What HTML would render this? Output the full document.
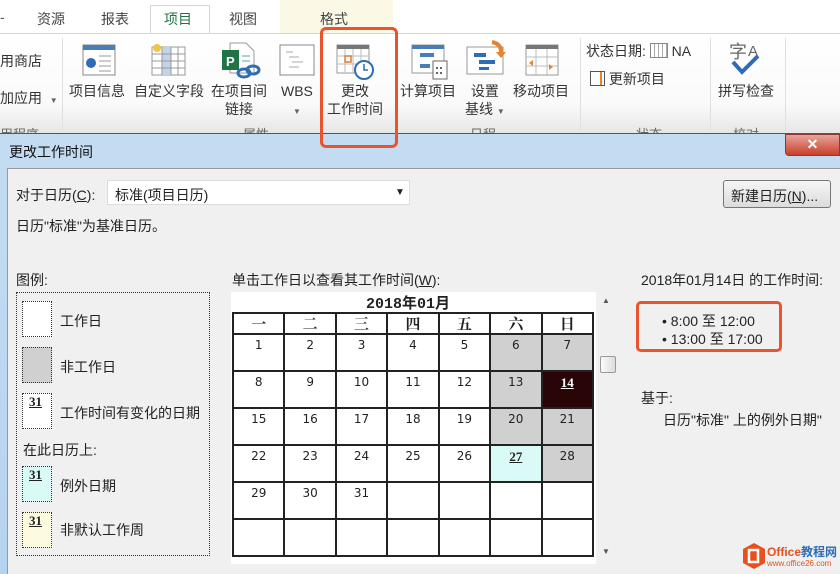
<!DOCTYPE html>
<html><head><meta charset="utf-8">
<style>
*{margin:0;padding:0;box-sizing:border-box}
body{width:840px;height:574px;overflow:hidden;position:relative;background:#fff;font-family:"Liberation Sans","Microsoft YaHei","Noto Sans CJK SC",sans-serif;font-size:14px;color:#222}
.a{position:absolute}
.t{position:absolute;white-space:nowrap}
.lbl{font-size:14px;color:#333;text-align:center;line-height:18px}
.cal td{border:2px solid #222;width:51.6px;height:37px;vertical-align:top;text-align:center;font-family:"DejaVu Sans","Noto Sans CJK SC",sans-serif;font-size:12px;padding-top:3px;background:#fff}
.cal th{border:2px solid #222;height:21px;font-family:"Noto Serif CJK SC","Noto Sans CJK SC",serif;font-size:15px;font-weight:bold;background:#fff;line-height:16px}
.g{background:#d0d0d0!important}
.box{position:absolute;left:22px;width:30px;height:36px;border:1px dotted #333;font-family:"Liberation Serif",serif;font-weight:bold;font-size:13px;text-decoration:underline;padding-left:6px;line-height:16px}
</style></head><body>
<div class="a" style="left:0;top:0;width:840px;height:34px;background:#fff"></div>
<div class="a" style="left:280px;top:0;width:113px;height:33px;background:#fbf8e6"></div>
<div class="t" style="left:0;top:9px;color:#555">-</div>
<div class="t" style="left:37px;top:9px;color:#444">资源</div>
<div class="t" style="left:101px;top:9px;color:#444">报表</div>
<div class="a" style="left:150px;top:5px;width:60px;height:30px;border:1px solid #d4d4d4;border-bottom:none;background:#fff"></div>
<div class="t" style="left:164px;top:9px;color:#217346">项目</div>
<div class="t" style="left:229px;top:9px;color:#444">视图</div>
<div class="t" style="left:320px;top:9px;color:#444">格式</div>
<div class="a" style="left:0;top:33px;width:840px;height:101px;background:linear-gradient(#fff,#fafafa 70%,#e6e6e6);border-top:1px solid #d6d6d6"></div>
<div class="a" style="left:62px;top:38px;width:1px;height:92px;background:#e0e0e0"></div>
<div class="a" style="left:580px;top:38px;width:1px;height:92px;background:#e0e0e0"></div>
<div class="a" style="left:710px;top:38px;width:1px;height:92px;background:#e0e0e0"></div>
<div class="a" style="left:785px;top:38px;width:1px;height:92px;background:#e0e0e0"></div>
<div class="t lbl" style="left:0;top:52px">用商店</div>
<div class="t lbl" style="left:0;top:89px">加应用 &nbsp;<span style="font-size:8px;color:#666">▼</span></div>
<svg class="a" style="left:82px;top:44px" width="34" height="32"><rect x="1" y="1" width="32" height="30" fill="#fff" stroke="#888"/><rect x="1" y="1" width="32" height="5" fill="#4a7ebb"/><circle cx="9" cy="19" r="5" fill="#2e6db4"/><g stroke="#999"><line x1="17" y1="12" x2="29" y2="12"/><line x1="17" y1="17" x2="29" y2="17"/><line x1="17" y1="22" x2="29" y2="22"/><line x1="17" y1="27" x2="29" y2="27"/></g></svg>
<svg class="a" style="left:148px;top:41px" width="40" height="36"><rect x="4" y="6" width="33" height="28" fill="#fff" stroke="#999"/><rect x="14" y="6" width="9" height="28" fill="#c5d3e6"/><g stroke="#999"><line x1="4" y1="13" x2="37" y2="13"/><line x1="4" y1="20" x2="37" y2="20"/><line x1="4" y1="27" x2="37" y2="27"/><line x1="14" y1="6" x2="14" y2="34"/><line x1="23" y1="6" x2="23" y2="34"/><line x1="30" y1="6" x2="30" y2="34"/></g><circle cx="9" cy="7" r="4" fill="#f5c342"/></svg>
<svg class="a" style="left:220px;top:42px" width="42" height="38"><path d="M10 1h16l8 8v22H10z" fill="#fff" stroke="#999"/><rect x="2" y="8" width="17" height="20" fill="#217346"/><text x="6" y="24" fill="#fff" font-size="13" font-weight="bold" font-family="Liberation Sans">P</text><g stroke="#5aa"><line x1="22" y1="14" x2="30" y2="14"/><line x1="22" y1="19" x2="30" y2="19"/></g><ellipse cx="24" cy="31" rx="6" ry="4" fill="none" stroke="#2e6db4" stroke-width="3"/><ellipse cx="33" cy="28" rx="6" ry="4" fill="none" stroke="#2e6db4" stroke-width="3"/></svg>
<svg class="a" style="left:279px;top:44px" width="36" height="32"><rect x="1" y="1" width="34" height="30" fill="#fff" stroke="#888"/><g stroke="#aaa"><line x1="7" y1="8" x2="14" y2="8"/><line x1="10" y1="13" x2="20" y2="13"/><line x1="13" y1="18" x2="24" y2="18"/><line x1="10" y1="23" x2="20" y2="23"/></g></svg>
<svg class="a" style="left:336px;top:44px" width="40" height="36"><rect x="1" y="1" width="32" height="28" fill="#fff" stroke="#999"/><rect x="1" y="1" width="32" height="4" fill="#777"/><g stroke="#bbb"><line x1="1" y1="12" x2="33" y2="12"/><line x1="1" y1="20" x2="33" y2="20"/><line x1="9" y1="5" x2="9" y2="29"/><line x1="17" y1="5" x2="17" y2="29"/><line x1="25" y1="5" x2="25" y2="29"/></g><rect x="9" y="12" width="6" height="6" fill="none" stroke="#e07a2b" stroke-width="1.5"/><circle cx="28" cy="26" r="9" fill="#fff" stroke="#2e6db4" stroke-width="2"/><path d="M28 20v6h4" stroke="#2e6db4" fill="none" stroke-width="1.5"/></svg>
<svg class="a" style="left:411px;top:44px" width="38" height="36"><rect x="1" y="1" width="32" height="28" fill="#fff" stroke="#999"/><rect x="1" y="1" width="32" height="4" fill="#4a7ebb"/><rect x="9" y="9" width="14" height="4" fill="#4a7ebb"/><rect x="9" y="20" width="10" height="4" fill="#4a7ebb"/><rect x="22" y="17" width="14" height="18" fill="#fff" stroke="#666"/><g fill="#666"><rect x="25" y="23" width="2" height="2"/><rect x="29" y="23" width="2" height="2"/><rect x="25" y="28" width="2" height="2"/><rect x="29" y="28" width="2" height="2"/></g></svg>
<svg class="a" style="left:466px;top:40px" width="40" height="36"><rect x="1" y="7" width="36" height="27" fill="#fff" stroke="#999"/><rect x="8" y="13" width="12" height="4" fill="#2e6db4"/><rect x="13" y="20" width="16" height="4" fill="#2e6db4"/><rect x="13" y="27" width="10" height="3" fill="#2e6db4"/><path d="M26 2q10 2 9 12" stroke="#e8822b" stroke-width="4" fill="none"/><path d="M30 12l5 6 5-6z" fill="#e8822b"/></svg>
<svg class="a" style="left:525px;top:44px" width="36" height="32"><rect x="1" y="1" width="32" height="30" fill="#fff" stroke="#999"/><rect x="1" y="1" width="32" height="4" fill="#777"/><g stroke="#bbb"><line x1="1" y1="13" x2="33" y2="13"/><line x1="1" y1="22" x2="33" y2="22"/><line x1="11" y1="5" x2="11" y2="31"/><line x1="22" y1="5" x2="22" y2="31"/></g><path d="M8 16l-4 3 4 3z" fill="#e8822b"/><path d="M24 20l4 3-4 3z" fill="#e8822b"/></svg>
<svg class="a" style="left:729px;top:40px" width="36" height="38"><text x="0" y="18" font-size="18" fill="#666" font-family="Noto Sans CJK SC">字</text><text x="19" y="16" font-size="15" fill="#666" font-family="Liberation Sans">A</text><path d="M4 22l9 10 16-16" stroke="#2e6db4" stroke-width="4" fill="none"/></svg>
<div class="t lbl" style="left:69px;top:82px">项目信息</div>
<div class="t lbl" style="left:134px;top:82px">自定义字段</div>
<div class="t lbl" style="left:211px;top:82px">在项目间<br>链接</div>
<div class="t lbl" style="left:281px;top:82px">WBS<br><span style="font-size:8px;color:#666">▼</span></div>
<div class="t lbl" style="left:327px;top:82px">更改<br>工作时间</div>
<div class="t lbl" style="left:400px;top:82px">计算项目</div>
<div class="t lbl" style="left:465px;top:82px">设置<br>基线 <span style="font-size:8px;color:#666">▼</span></div>
<div class="t lbl" style="left:513px;top:82px">移动项目</div>
<div class="t lbl" style="left:586px;top:42px">状态日期: <span style="display:inline-block;width:18px;height:15px;border:1px solid #888;background:repeating-linear-gradient(90deg,#fff 0 3px,#aaa 3px 4px);vertical-align:-2px"></span> NA</div>
<div class="t lbl" style="left:590px;top:70px"><span style="display:inline-block;width:15px;height:15px;border:1px solid #555;vertical-align:-2px;background:linear-gradient(90deg,#fff 9px,#e8822b 9px 11px,#fff 11px)"></span> 更新项目</div>
<div class="t lbl" style="left:718px;top:82px">拼写检查</div>
<div class="t" style="left:0;top:124px;font-size:13px;color:#666">用程序</div>
<div class="t" style="left:243px;top:124px;font-size:13px;color:#666">属性</div>
<div class="t" style="left:470px;top:124px;font-size:13px;color:#666">日程</div>
<div class="t" style="left:636px;top:124px;font-size:13px;color:#666">状态</div>
<div class="t" style="left:733px;top:124px;font-size:13px;color:#666">校对</div>
<div class="a" style="left:0;top:133px;width:840px;height:441px;background:linear-gradient(#c4dcf2,#b6d3ef);border-top:1px solid #555"></div>
<div class="t" style="left:9px;top:142px;font-size:14px;color:#111">更改工作时间</div>
<div class="a" style="left:785px;top:134px;width:55px;height:22px;background:linear-gradient(#e8a49a,#c7402c);border:1px solid #8a3a30;border-radius:0 0 0 4px;color:#fff;text-align:center;font-weight:bold;font-size:14px;line-height:18px">✕</div>
<div class="a" style="left:7px;top:168px;width:833px;height:406px;background:#f0f0f0;border-top:1px solid #999;border-left:1px solid #999"></div>
<div class="t" style="left:16px;top:185px">对于日历(<u>C</u>):</div>
<div class="a" style="left:107px;top:180px;width:303px;height:25px;background:#fff;border:1px solid #ddd"></div>
<div class="t" style="left:115px;top:185px">标准(项目日历)</div>
<div class="t" style="left:395px;top:187px;font-size:10px">▼</div>
<div class="a" style="left:723px;top:180px;width:108px;height:28px;border:1px solid #777;border-radius:3px;background:linear-gradient(#f6f6f6,#dcdcdc)"></div>
<div class="t" style="left:731px;top:186px">新建日历(<u>N</u>)...</div>
<div class="t" style="left:16px;top:216px">日历"标准"为基准日历。</div>
<div class="t" style="left:16px;top:270px">图例:</div>
<div class="a" style="left:16px;top:292px;width:194px;height:264px;border:1px dotted #333"></div>
<div class="box" style="top:301px;background:#fff"></div>
<div class="t" style="left:60px;top:311px">工作日</div>
<div class="box" style="top:347px;background:#d0d0d0"></div>
<div class="t" style="left:60px;top:357px">非工作日</div>
<div class="box" style="top:393px;background:#fff">31</div>
<div class="t" style="left:60px;top:403px">工作时间有变化的日期</div>
<div class="t" style="left:23px;top:440px">在此日历上:</div>
<div class="box" style="top:466px;background:#dafaf8">31</div>
<div class="t" style="left:60px;top:476px">例外日期</div>
<div class="box" style="top:512px;background:#fdfbdf">31</div>
<div class="t" style="left:60px;top:520px">非默认工作周</div>
<div class="t" style="left:232px;top:270px">单击工作日以查看其工作时间(<u>W</u>):</div>
<div class="a" style="left:231px;top:292px;width:365px;height:272px;background:#fff"></div>
<div class="t" style="left:366px;top:292px;font-weight:bold;font-size:15px;font-family:'Liberation Mono','Noto Sans CJK SC',monospace">2018年01月</div>
<table class="cal a" style="left:232px;top:312px;border-collapse:collapse;width:362px">
<tr><th>一</th><th>二</th><th>三</th><th>四</th><th>五</th><th>六</th><th>日</th></tr>
<tr><td>1</td><td>2</td><td>3</td><td>4</td><td>5</td><td class="g">6</td><td class="g">7</td></tr>
<tr><td>8</td><td>9</td><td>10</td><td>11</td><td>12</td><td class="g">13</td><td style="background:#2a0508;color:#fff;font-weight:bold;text-decoration:underline;font-family:'Liberation Serif',serif;font-size:13px">14</td></tr>
<tr><td>15</td><td>16</td><td>17</td><td>18</td><td>19</td><td class="g">20</td><td class="g">21</td></tr>
<tr><td>22</td><td>23</td><td>24</td><td>25</td><td>26</td><td style="background:#dafaf8;font-weight:bold;text-decoration:underline;font-family:'Liberation Serif',serif;font-size:13px">27</td><td class="g">28</td></tr>
<tr><td>29</td><td>30</td><td>31</td><td></td><td></td><td></td><td></td></tr>
<tr><td></td><td></td><td></td><td></td><td></td><td></td><td></td></tr>
</table>
<div class="a" style="left:598px;top:292px;width:18px;height:272px;background:#f0f0f0"></div>
<div class="t" style="left:602px;top:296px;font-size:8px;color:#555">▲</div>
<div class="a" style="left:600px;top:356px;width:16px;height:17px;border:1px solid #999;border-radius:2px;background:linear-gradient(90deg,#fafafa,#ddd)"></div>
<div class="t" style="left:602px;top:547px;font-size:8px;color:#555">▼</div>
<div class="t" style="left:641px;top:270px">2018年01月14日 的工作时间:</div>
<div class="a" style="left:636px;top:301px;width:146px;height:51px;border:3px solid #e9542f;border-radius:5px"></div>
<div class="t" style="left:662px;top:311px">• 8:00 至 12:00</div>
<div class="t" style="left:662px;top:329px">• 13:00 至 17:00</div>
<div class="t" style="left:641px;top:388px">基于:</div>
<div class="t" style="left:663px;top:410px">日历"标准" 上的例外日期"</div>
<div class="a" style="left:320px;top:27px;width:78px;height:121px;border:3px solid #e9542f;border-radius:6px"></div>
<svg class="a" style="left:741px;top:542px" width="26" height="28"><path d="M13 1l11 6v14l-11 6-11-6V7z" fill="#e8501d"/><rect x="8" y="8" width="9" height="12" fill="none" stroke="#fff" stroke-width="2.5"/></svg>
<div class="t" style="left:767px;top:543px;font-size:12px;font-weight:bold;color:#e8501d">Office<span style="color:#2e6db4">教程网</span></div>
<div class="t" style="left:767px;top:559px;font-size:8px;color:#e8501d">www.office26.com</div>
</body></html>
